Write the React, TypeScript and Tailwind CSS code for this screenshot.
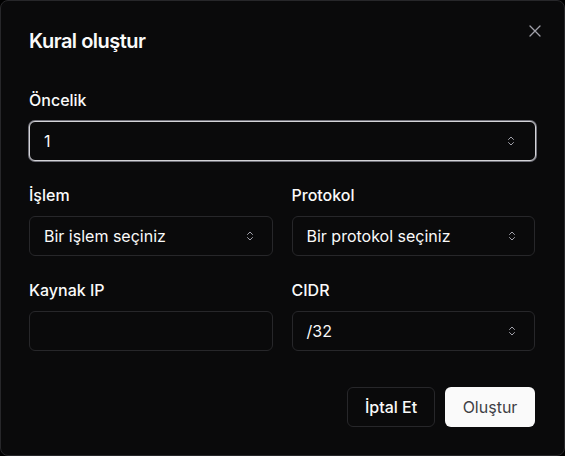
import React from "react";

const Chevrons = () => (
  <svg width="8" height="12" viewBox="0 0 8 12" fill="none" className="text-[#a1a1aa]">
    <path d="M1.5 4.5 4 2l2.5 2.5M1.5 7.5 4 10l2.5-2.5" stroke="currentColor" strokeWidth="1" strokeLinecap="round" strokeLinejoin="round" />
  </svg>
);

const Label = ({ children }: { children: React.ReactNode }) => (
  <label className="block text-base font-medium leading-6 text-[#fafafa]">{children}</label>
);

const SelectBox = ({ value, focused }: { value: string; focused?: boolean }) => (
  <div
    className={
      focused
        ? "flex h-10 items-center justify-between rounded-md border border-[#d4d4d8] bg-[#0a0a0b] pl-[14px] pr-[20px] ring-1 ring-[#71717a]"
        : "flex h-10 items-center justify-between rounded-md border border-[#27272a] bg-[#0a0a0b] pl-[14px] pr-[18px]"
    }
  >
    <span className="text-base text-[#fafafa]">{value}</span>
    <Chevrons />
  </div>
);

export default function App() {
  return (
    <div className="h-[456px] w-[565px] bg-black" style={{ fontFamily: "Inter, 'Noto Sans', sans-serif" }}>
      <div className="relative flex h-full flex-col rounded-lg border border-[#27272a] bg-[#0a0a0b] px-7 pt-[26px]">
        <button className="absolute right-[22px] top-[23px] text-[#a1a1aa]">
          <svg width="14" height="14" viewBox="0 0 14 14" fill="none">
            <path d="M2 2l10 10M12 2 2 12" stroke="currentColor" strokeWidth="1.3" strokeLinecap="round" />
          </svg>
        </button>
        <h2 className="text-xl font-semibold leading-7 tracking-tight text-[#fafafa]">Kural oluştur</h2>

        <div className="mt-[33px] flex flex-col gap-[9px]">
          <Label>Öncelik</Label>
          <SelectBox value="1" focused />
        </div>

        <div className="mt-[22px] grid grid-cols-2 gap-x-[19px] pr-px">
          <div className="flex flex-col gap-[9px]">
            <Label>İşlem</Label>
            <SelectBox value="Bir işlem seçiniz" />
          </div>
          <div className="flex flex-col gap-[9px]">
            <Label>Protokol</Label>
            <SelectBox value="Bir protokol seçiniz" />
          </div>
        </div>

        <div className="mt-[22px] grid grid-cols-2 gap-x-[19px] pr-px">
          <div className="flex flex-col gap-[9px]">
            <Label>Kaynak IP</Label>
            <div className="h-10 rounded-md border border-[#27272a] bg-[#0a0a0b]" />
          </div>
          <div className="flex flex-col gap-[9px]">
            <Label>CIDR</Label>
            <SelectBox value="/32" />
          </div>
        </div>

        <div className="mt-9 flex justify-end gap-[10px] pr-px">
          <button className="h-10 w-[88px] rounded-md border border-[#27272a] bg-[#0a0a0b] text-base font-medium text-[#fafafa]">
            İptal Et
          </button>
          <button className="h-10 w-[90px] rounded-md bg-[#fafafa] text-base text-[#3f3f46]">
            Oluştur
          </button>
        </div>
      </div>
    </div>
  );
}
